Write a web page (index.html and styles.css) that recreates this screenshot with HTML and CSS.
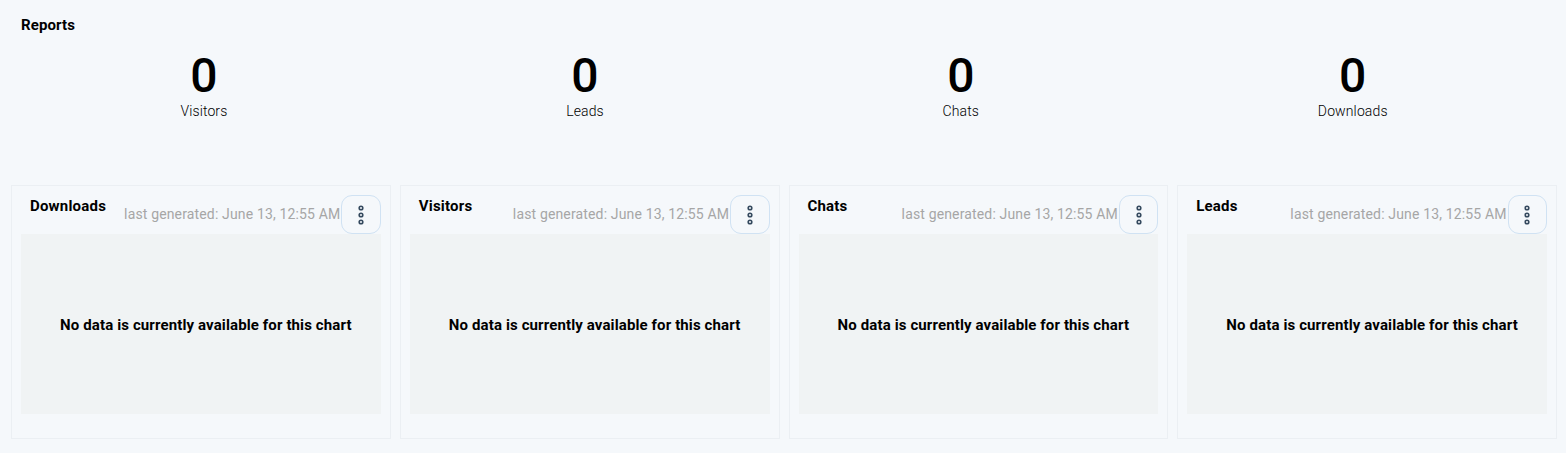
FILE: index.html
```html
<!DOCTYPE html>
<html lang="en">
<head>
<meta charset="utf-8">
<title>Reports</title>
<link rel="stylesheet" href="styles.css">
</head>
<body>
<main class="page">
  <h1 class="page-title">Reports</h1>
  <section class="stats">
    <div class="stat"><div class="stat-value">0</div><div class="stat-label">Visitors</div></div>
    <div class="stat"><div class="stat-value">0</div><div class="stat-label">Leads</div></div>
    <div class="stat"><div class="stat-value">0</div><div class="stat-label">Chats</div></div>
    <div class="stat"><div class="stat-value">0</div><div class="stat-label">Downloads</div></div>
  </section>
  <section class="cards">
    <article class="card">
      <header class="card-head">
        <h2 class="card-title">Downloads</h2>
        <span class="card-meta">last generated: June 13, 12:55 AM</span>
        <button class="menu-btn" aria-label="Menu"><svg width="6" height="20" viewBox="0 0 6 20"><circle cx="3" cy="3" r="1.8"/><circle cx="3" cy="10" r="1.8"/><circle cx="3" cy="17" r="1.8"/></svg></button>
      </header>
      <div class="chart">No data is currently available for this chart</div>
    </article>
    <article class="card">
      <header class="card-head">
        <h2 class="card-title">Visitors</h2>
        <span class="card-meta">last generated: June 13, 12:55 AM</span>
        <button class="menu-btn" aria-label="Menu"><svg width="6" height="20" viewBox="0 0 6 20"><circle cx="3" cy="3" r="1.8"/><circle cx="3" cy="10" r="1.8"/><circle cx="3" cy="17" r="1.8"/></svg></button>
      </header>
      <div class="chart">No data is currently available for this chart</div>
    </article>
    <article class="card">
      <header class="card-head">
        <h2 class="card-title">Chats</h2>
        <span class="card-meta">last generated: June 13, 12:55 AM</span>
        <button class="menu-btn" aria-label="Menu"><svg width="6" height="20" viewBox="0 0 6 20"><circle cx="3" cy="3" r="1.8"/><circle cx="3" cy="10" r="1.8"/><circle cx="3" cy="17" r="1.8"/></svg></button>
      </header>
      <div class="chart">No data is currently available for this chart</div>
    </article>
    <article class="card">
      <header class="card-head">
        <h2 class="card-title">Leads</h2>
        <span class="card-meta">last generated: June 13, 12:55 AM</span>
        <button class="menu-btn" aria-label="Menu"><svg width="6" height="20" viewBox="0 0 6 20"><circle cx="3" cy="3" r="1.8"/><circle cx="3" cy="10" r="1.8"/><circle cx="3" cy="17" r="1.8"/></svg></button>
      </header>
      <div class="chart">No data is currently available for this chart</div>
    </article>
  </section>
</main>
</body>
</html>
```
FILE: styles.css
```css
* { box-sizing: border-box; }
html, body { margin: 0; height: 100%; }
body {
  background: #f5f8fb;
  color: #000;
  font-family: Roboto, "Liberation Sans", sans-serif;
  font-size: 14px;
  overflow: hidden;
}
.page { padding: 16px 9px 0 11px; }
.page-title {
  margin: 0 0 0 10px;
  font-size: 15px;
  line-height: 18px;
  font-weight: 700;
  letter-spacing: 0.1px;
}
.stats {
  display: flex;
  justify-content: space-around;
  margin-top: 16px;
  height: 135px;
}
.stat { text-align: center; }
.stat-value {
  font-size: 48px;
  line-height: 52px;
  font-weight: 500;
}
.stat-label {
  font-size: 14px;
  line-height: 18px;
  font-weight: 300;
  letter-spacing: 0.12px;
}
.cards {
  display: grid;
  grid-template-columns: repeat(4, 1fr);
  gap: 9px;
}
.card {
  height: 254px;
  padding: 9px 9px 0;
  border: 1px solid #ebeff3;
}
.card-head {
  display: flex;
  height: 39px;
}
.card-title {
  margin: 1px auto 0 9px;
  font-size: 15px;
  line-height: 20px;
  font-weight: 700;
  letter-spacing: 0.2px;
}
.card-meta {
  margin-top: 10px;
  color: #a6a6a6;
  font-size: 14px;
  line-height: 18px;
  letter-spacing: 0.15px;
}
.menu-btn {
  flex: none;
  width: 39.4px;
  height: 39px;
  padding: 0;
  margin-left: 1px;
  display: flex;
  align-items: center;
  justify-content: center;
  background: transparent;
  border: 1px solid #d0e2f3;
  border-radius: 11px;
}
.menu-btn circle {
  fill: none;
  stroke: #34495e;
  stroke-width: 1.6;
}
.chart {
  height: 180px;
  padding: 2px 0 0 10px;
  display: flex;
  align-items: center;
  justify-content: center;
  background: #f0f3f4;
  font-size: 15px;
  font-weight: 700;
  letter-spacing: 0.12px;
}
```
